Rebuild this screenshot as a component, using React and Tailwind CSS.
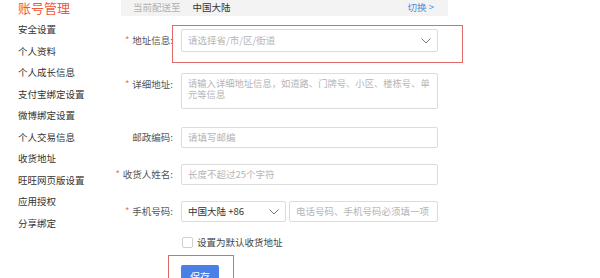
import React from "react";

const MENU = [
  "安全设置",
  "个人资料",
  "个人成长信息",
  "支付宝绑定设置",
  "微博绑定设置",
  "个人交易信息",
  "收货地址",
  "旺旺网页版设置",
  "应用授权",
  "分享绑定",
];

function Chevron() {
  return (
    <svg width="10" height="6" viewBox="0 0 10 6" className="shrink-0">
      <polyline points="0.5,0.5 5,5 9.5,0.5" fill="none" stroke="#777" strokeWidth="1" />
    </svg>
  );
}

function Label({ required, children }) {
  return (
    <div className="w-[65px] shrink-0 text-right text-[9.5px] text-[#555] leading-none whitespace-nowrap">
      {required && <span className="text-[#f26c5a] mr-[3px]">*</span>}
      {children}
    </div>
  );
}

function Input({ placeholder, className = "" }) {
  return (
    <div
      className={`h-[21px] border border-[#dcdcdc] rounded-[2px] bg-white flex items-center px-[6px] text-[9.5px] text-[#b5b5b5] ${className}`}
    >
      {placeholder}
    </div>
  );
}

export default function App() {
  return (
    <div
      className="w-[600px] h-[278px] overflow-hidden bg-white flex"
      style={{ fontFamily: '"Noto Sans CJK SC", "Noto Sans", sans-serif' }}
    >
      <aside className="w-[108px] shrink-0 pl-[18px]">
        <div className="text-[13px] leading-none text-[#f2583e] mt-[1px] h-[13px]">账号管理</div>
        <ul className="mt-[10px] flex flex-col gap-[11.5px]">
          {MENU.map((item) => (
            <li key={item} className="text-[9.5px] leading-[10px] text-[#333] whitespace-nowrap">
              {item}
            </li>
          ))}
        </ul>
      </aside>

      <main className="flex-1">
        <div className="ml-[13px] w-[327px] h-[16px] bg-[#f3f3f3] flex items-center text-[9.5px] leading-none">
          <span className="ml-[12px] text-[#b0b0b0]">当前配送至</span>
          <span className="ml-[12px] text-[#333]">中国大陆</span>
          <span className="ml-auto mr-[14px] text-[#4a8fd8]">切换 &gt;</span>
        </div>

        <div className="mt-[13px] flex items-center gap-[8px]">
          <Label required>地址信息:</Label>
          <div className="relative">
            <div className="w-[257px] h-[23px] border border-[#dcdcdc] rounded-[2px] flex items-center justify-between px-[6px] text-[9.5px] text-[#b5b5b5]">
              请选择省/市/区/街道
              <Chevron />
            </div>
            <div className="absolute left-[-9px] top-[-4px] w-[291px] h-[38px] border border-[#de6a6a] pointer-events-none" />
          </div>
        </div>

        <div className="mt-[21px] flex items-start gap-[8px]">
          <div className="pt-[7px]">
            <Label required>详细地址:</Label>
          </div>
          <div className="w-[257px] h-[36px] border border-[#dcdcdc] rounded-[2px] pl-[6px] pr-[1px] pt-[4px] text-[9.3px] leading-[11px] text-[#b5b5b5]">
            请输入详细地址信息，如道路、门牌号、小区、楼栋号、单元等信息
          </div>
        </div>

        <div className="mt-[18px] flex items-center gap-[8px]">
          <Label>邮政编码:</Label>
          <Input placeholder="请填写邮编" className="w-[257px]" />
        </div>

        <div className="mt-[16px] flex items-center gap-[8px]">
          <Label required>收货人姓名:</Label>
          <Input placeholder="长度不超过25个字符" className="w-[257px]" />
        </div>

        <div className="mt-[16px] flex items-center gap-[8px]">
          <Label required>手机号码:</Label>
          <div className="flex gap-[3px]">
            <div className="w-[105px] h-[21px] border border-[#dcdcdc] rounded-[2px] flex items-center justify-between px-[6px] text-[9.5px] text-[#333]">
              中国大陆 +86
              <Chevron />
            </div>
            <Input placeholder="电话号码、手机号码必须填一项" className="w-[149px]" />
          </div>
        </div>

        <div className="mt-[15px] ml-[74px] flex items-center gap-[4px]">
          <div className="w-[11px] h-[11px] border border-[#cfcfcf] rounded-[2px] bg-white" />
          <span className="text-[9.5px] leading-none text-[#444]">设置为默认收货地址</span>
        </div>

        <div className="mt-[17px] ml-[73px] relative w-[38px]">
          <div className="w-[38px] h-[22px] bg-[#4a7fe6] rounded-[2px] flex items-center justify-center text-[10px] text-white">
            保存
          </div>
          <div className="absolute left-[-13px] top-[-10px] w-[66px] h-[40px] border border-[#de6a6a] pointer-events-none" />
        </div>
      </main>
    </div>
  );
}
